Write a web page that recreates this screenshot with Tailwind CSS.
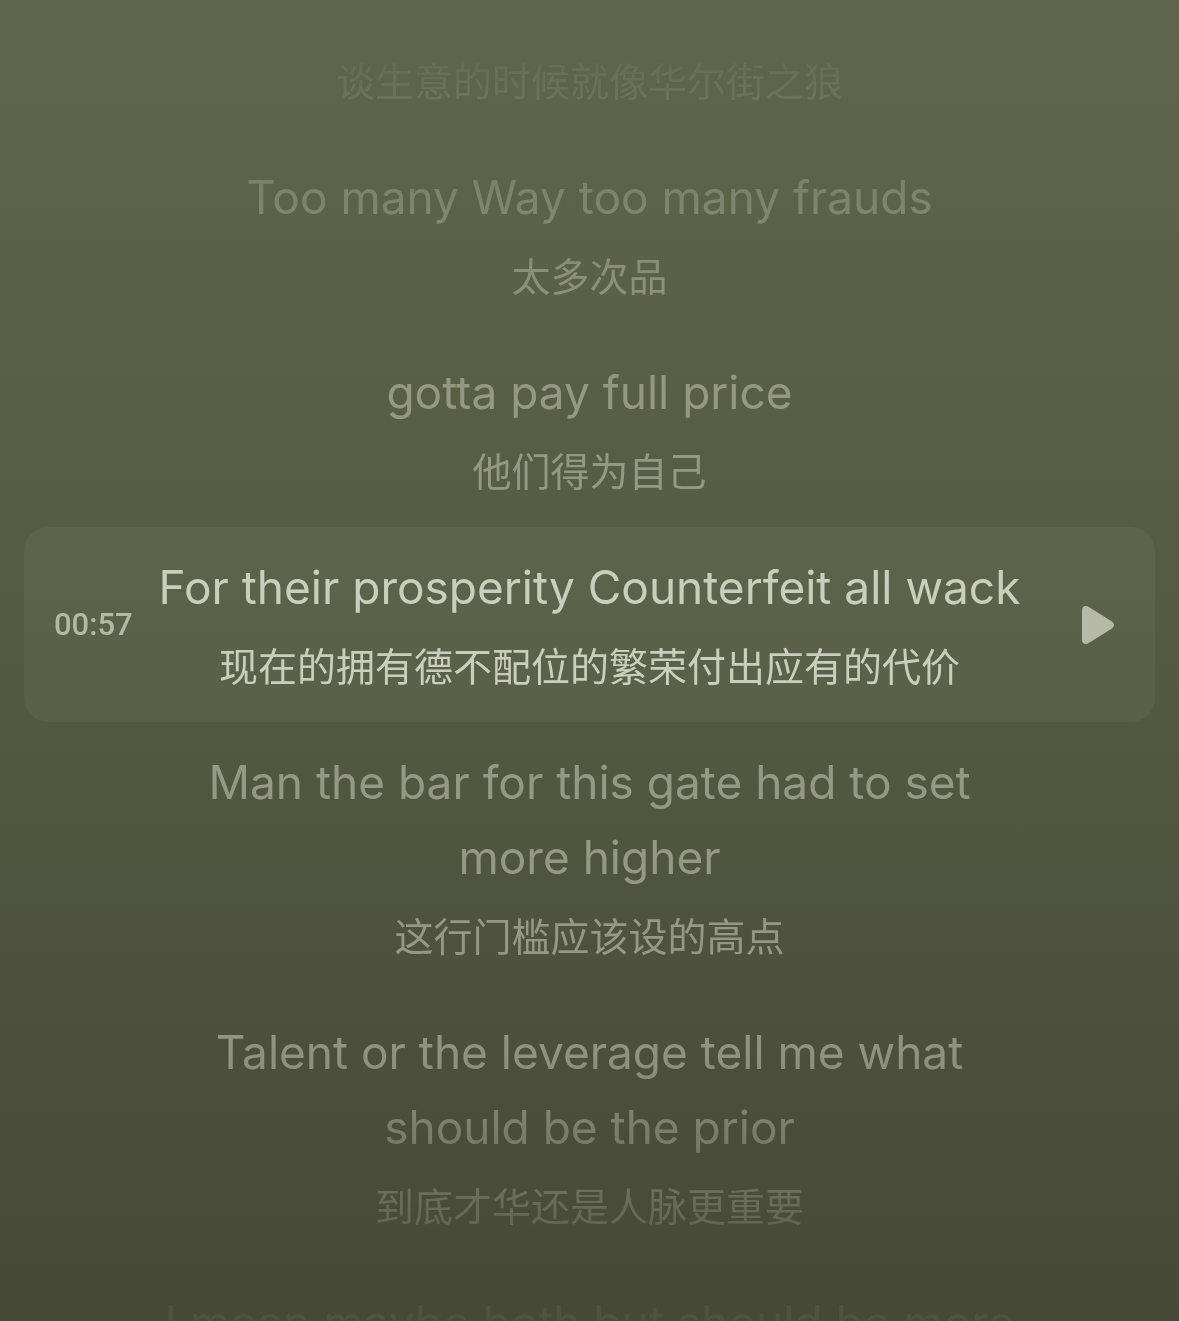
<!DOCTYPE html>
<html lang="en">
  <head>
    <meta charset="UTF-8" />
    <meta name="viewport" content="width=device-width, initial-scale=1.0" />
    <title>Lyrics</title>
    <script src="https://cdn.jsdelivr.net/npm/@tailwindcss/browser@4"></script>
  </head>
  <body class="bg-[#464936]">
    <main
      class="h-screen overflow-hidden bg-linear-to-b from-[#60664c] via-[#535840] via-55% to-[#464936] font-['Inter','Noto_Sans_CJK_SC',sans-serif] text-center text-[46px] leading-[75px] text-[#959883]"
    >
      <!-- lyrics fade out towards both ends of the screen -->
      <ul
        class="h-full overflow-hidden px-6 mask-[linear-gradient(to_bottom,transparent_1%,rgb(0_0_0/0.22)_6%,rgb(0_0_0/0.62)_15%,rgb(0_0_0/0.85)_21%,#000_30%,#000_76%,rgb(0_0_0/0.92)_80%,rgb(0_0_0/0.68)_85%,rgb(0_0_0/0.42)_91%,rgb(0_0_0/0.12)_98%)]"
      >
        <li class="px-32 pt-[55px] pb-7">
          <p lang="zh" class="text-[39px] leading-[54px]">谈生意的时候就像华尔街之狼</p>
        </li>
        <li class="px-32 pt-[23px] pb-7">
          <p>Too many Way too many frauds</p>
          <p lang="zh" class="mt-[15px] text-[39px] leading-[54px]">太多次品</p>
        </li>
        <li class="px-32 pt-[23px] pb-7">
          <p>gotta pay full price</p>
          <p lang="zh" class="mt-[15px] text-[39px] leading-[54px]">他们得为自己</p>
        </li>
        <li
          class="grid grid-cols-[90px_1fr_90px] items-center rounded-3xl bg-[#e6ebd2]/5 px-[30px] text-[#cbcebc]"
        >
          <time class="text-left font-['Roboto',sans-serif] text-[31px] font-medium text-[#b5b8a4]">00:57</time>
          <div class="pt-[23px] pb-7">
            <p>For their prosperity Counterfeit all wack</p>
            <p lang="zh" class="mt-[15px] text-[39px] leading-[54px]">现在的拥有德不配位的繁荣付出应有的代价</p>
          </div>
          <button type="button" aria-label="Play from here" class="mr-[11px] justify-self-end">
            <svg class="h-10 w-8" viewBox="0 0 32 40" fill="#b7baa8">
              <path d="M0 5C0 1.2 3.4-.1 6.4 1.7L29.6 16.2Q32 17.7 32 20T29.6 23.8L6.4 38.3C3.4 40.1 0 38.8 0 35Z" />
            </svg>
          </button>
        </li>
        <li class="px-32 pt-[23px] pb-7">
          <p>Man the bar for this gate had to set more higher</p>
          <p lang="zh" class="mt-[15px] text-[39px] leading-[54px]">这行门槛应该设的高点</p>
        </li>
        <li class="px-32 pt-[23px] pb-7">
          <p>Talent or the leverage tell me what should be the prior</p>
          <p lang="zh" class="mt-[15px] text-[39px] leading-[54px]">到底才华还是人脉更重要</p>
        </li>
        <li class="px-32 pt-[23px]">
          <p>I mean maybe both but should be more</p>
        </li>
      </ul>
    </main>
  </body>
</html>
